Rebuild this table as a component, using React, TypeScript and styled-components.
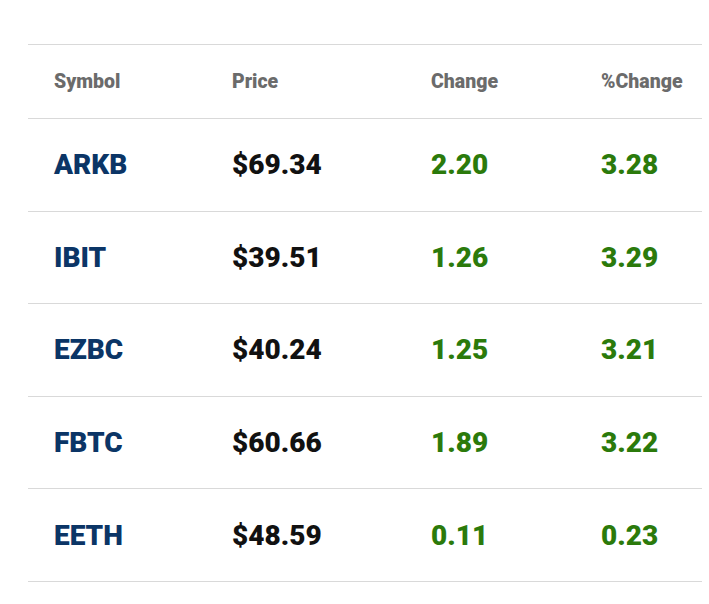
import React from "react";
import styled, { createGlobalStyle } from "styled-components";

const Global = createGlobalStyle`
  html, body { margin: 0; padding: 0; background: #ffffff; }
  body { font-family: Roboto, "Liberation Sans", Arial, sans-serif; }
`;

const Wrap = styled.div`
  padding: 44px 7px 0 28px;
`;

const Table = styled.div`
  border-top: 1px solid #d9d9d9;
`;

const Row = styled.div<{ $header?: boolean }>`
  display: grid;
  grid-template-columns: 178px 199px 170px 1fr;
  align-items: center;
  height: ${(p) => (p.$header ? "73px" : "91.6px")};
  padding-left: 26px;
  border-bottom: 1px solid #d9d9d9;
`;

const HeadCell = styled.div`
  font-size: 19.5px;
  font-weight: 900;
  color: #6b6b6b;
`;

const Cell = styled.div<{ $tone: "symbol" | "price" | "up" }>`
  font-size: 28px;
  font-weight: 900;
  color: ${(p) =>
    p.$tone === "symbol" ? "#0b3566" : p.$tone === "price" ? "#111111" : "#2b7a0b"};
`;

const data = [
  { s: "ARKB", p: "$69.34", c: "2.20", pc: "3.28" },
  { s: "IBIT", p: "$39.51", c: "1.26", pc: "3.29" },
  { s: "EZBC", p: "$40.24", c: "1.25", pc: "3.21" },
  { s: "FBTC", p: "$60.66", c: "1.89", pc: "3.22" },
  { s: "EETH", p: "$48.59", c: "0.11", pc: "0.23" },
];

export default function App() {
  return (
    <>
      <Global />
      <Wrap>
        <Table>
          <Row $header>
            <HeadCell>Symbol</HeadCell>
            <HeadCell>Price</HeadCell>
            <HeadCell>Change</HeadCell>
            <HeadCell>%Change</HeadCell>
          </Row>
          {data.map((d) => (
            <Row key={d.s}>
              <Cell $tone="symbol">{d.s}</Cell>
              <Cell $tone="price">{d.p}</Cell>
              <Cell $tone="up">{d.c}</Cell>
              <Cell $tone="up">{d.pc}</Cell>
            </Row>
          ))}
        </Table>
      </Wrap>
    </>
  );
}
